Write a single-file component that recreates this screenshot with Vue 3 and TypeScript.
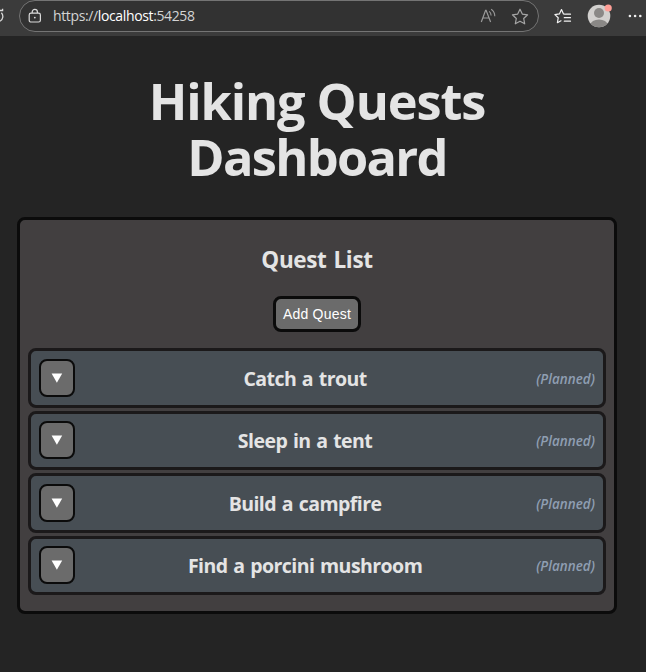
<script setup lang="ts">
import { ref } from 'vue'

interface Quest {
  id: number
  title: string
  status: string
}

const address = { scheme: 'https://', host: 'localhost', port: ':54258' }

const quests = ref<Quest[]>([
  { id: 1, title: 'Catch a trout', status: 'Planned' },
  { id: 2, title: 'Sleep in a tent', status: 'Planned' },
  { id: 3, title: 'Build a campfire', status: 'Planned' },
  { id: 4, title: 'Find a porcini mushroom', status: 'Planned' },
])
</script>

<template>
  <div class="window">
    <header class="toolbar">
      <svg class="reload" width="5" height="16" viewBox="0 0 5 16" fill="none" stroke="#d8d8d8" stroke-width="1.3">
        <path d="M0 2.5H2.6V0.8M0 13.2C3.4 11.2 3.6 7.2 1.4 4.8" />
      </svg>
      <div class="address">
        <svg class="lock" width="14" height="16" viewBox="0 0 14 16" fill="none" stroke="#dadada" stroke-width="1.2">
          <rect x="1.2" y="5.2" width="11.2" height="8.8" rx="1.8" />
          <path d="M4.2 5V3.9a2.6 2.6 0 0 1 5.2 0V5" />
          <circle cx="6.8" cy="9.6" r="0.9" fill="#dadada" stroke="none" />
        </svg>
        <span class="url">{{ address.scheme }}<b>{{ address.host }}</b>{{ address.port }}</span>
        <svg class="read" width="17" height="16" viewBox="0 0 17 16" fill="none" stroke="#9b9b9b" stroke-width="1.2">
          <path d="M1.3 14L5.6 2.4h.5L10.6 14M2.9 10h6.1" />
          <path d="M9.2 3.4q1.9 1.6 1.9 4M11.2 1.3q3.6 2.6 3.6 7" stroke-width="1.1" />
        </svg>
        <svg class="star" width="18" height="17" viewBox="0 0 18 17" fill="none" stroke="#a6a6a6" stroke-width="1.2" stroke-linejoin="round">
          <path d="M9 1.2l2.3 4.9 5.3.7-3.9 3.7 1 5.3L9 13.2l-4.7 2.6 1-5.3L1.4 6.8l5.3-.7z" />
        </svg>
      </div>
      <svg class="favorites" width="18" height="17" viewBox="0 0 18 17" fill="none" stroke="#f2f2f2" stroke-width="1.2" stroke-linejoin="round" stroke-linecap="round">
        <path d="M10.8 6.2L9.5 5.9 7.5 1.6 5.4 5.9.9 6.6 4.2 9.8l-.8 4.9L7 12.8M11.6 6.2h4.9M10.3 9.7h6.2M10.3 13.2h6.2" />
      </svg>
      <svg class="avatar" width="26" height="26" viewBox="0 0 26 26">
        <defs>
          <clipPath id="avatar-clip"><circle cx="12" cy="14" r="11.3" /></clipPath>
        </defs>
        <circle cx="12" cy="14" r="11.3" fill="#d2d0ce" />
        <g clip-path="url(#avatar-clip)" fill="#8a8886">
          <circle cx="12" cy="11" r="5" />
          <ellipse cx="12" cy="23" rx="8.5" ry="5.6" />
        </g>
        <circle cx="21.2" cy="6" r="3.6" fill="#ff9f97" />
      </svg>
      <svg class="more" width="14" height="4" viewBox="0 0 14 4" fill="#f0f0f0">
        <circle cx="1.9" cy="2" r="1.3" />
        <circle cx="7.1" cy="2" r="1.3" />
        <circle cx="12.3" cy="2" r="1.3" />
      </svg>
    </header>

    <main class="page">
      <h1><span class="first">Hiking Quests</span> <span class="second">Dashboard</span></h1>
      <section class="panel">
        <h2>Quest List</h2>
        <button class="add" type="button">Add Quest</button>
        <ul class="quests">
          <li v-for="quest in quests" :key="quest.id" class="quest">
            <button class="toggle" type="button" :aria-label="quest.title">
              <svg width="12" height="10" viewBox="0 0 12 10"><path d="M.6.5h10.6L5.9 9.8z" fill="#fff" /></svg>
            </button>
            <h3>{{ quest.title }}</h3>
            <span class="status">({{ quest.status }})</span>
          </li>
        </ul>
      </section>
    </main>
  </div>
</template>

<style>
body {
  background: #242424;
}
</style>

<style scoped>
.window {
  height: 672px;
  overflow: hidden;
  background: #242424;
  color: #e4e4e4;
  font-family: "Segoe UI", "Open Sans", "Noto Sans", sans-serif;
}

.toolbar {
  box-sizing: border-box;
  display: flex;
  align-items: center;
  height: 36px;
  padding-bottom: 4px;
  background: #3b3b3b;
}

.toolbar svg {
  display: block;
  flex: none;
}

.address {
  box-sizing: border-box;
  display: flex;
  align-items: center;
  width: 520px;
  height: 32px;
  margin-left: 14px;
  padding: 0 9px 0 8px;
  border: 1px solid #747474;
  border-radius: 16px;
  background: #323232;
}

.url {
  flex: 1;
  margin-left: 11px;
  font-size: 14px;
  line-height: 20px;
  letter-spacing: -0.37px;
  color: #d4d4d4;
}

.url b {
  font-weight: 400;
  color: #fff;
}

.star {
  margin-left: 14px;
}

.favorites {
  margin-left: 15px;
}

.avatar {
  margin: -3px 0 0 15px;
}

.more {
  margin-left: 15px;
}

.page {
  padding: 36.5px 29px 0 17px;
}

h1 {
  margin: 0;
  font-size: 50.5px;
  line-height: 56.6px;
  font-weight: 700;
  text-align: center;
}

h1 span {
  display: block;
}

.first {
  letter-spacing: -1.1px;
}

.second {
  letter-spacing: -1.7px;
}

.panel {
  box-sizing: border-box;
  height: 397px;
  margin-top: 31.3px;
  padding: 21px 8px 0;
  border: 3px solid #0b0b0b;
  border-radius: 8px;
  background: #423f40;
  text-align: center;
}

h2 {
  margin: 0;
  font-size: 22.5px;
  line-height: 38px;
  font-weight: 700;
  letter-spacing: -0.35px;
  word-spacing: 1.5px;
}

.add {
  display: block;
  box-sizing: border-box;
  width: 88px;
  height: 36px;
  margin: 17px auto 0;
  padding: 0;
  border: 3px solid #0b0b0b;
  border-radius: 8px;
  background: #6b6b6b;
  color: #fff;
  font-family: Arial, "Liberation Sans", sans-serif;
  font-size: 14px;
  letter-spacing: 0.2px;
}

.quests {
  display: flex;
  flex-direction: column;
  gap: 3px;
  margin: 16.25px 0 0;
  padding: 0;
  list-style: none;
}

.quest {
  box-sizing: border-box;
  display: grid;
  grid-template-columns: auto 1fr auto;
  align-items: center;
  height: 59.5px;
  padding: 0 8px;
  border: 3px solid #1b191a;
  border-radius: 8px;
  background: #474e54;
}

.toggle {
  box-sizing: border-box;
  display: flex;
  align-items: center;
  justify-content: center;
  width: 36px;
  height: 38px;
  padding: 0;
  border: 2px solid #0b0b0b;
  border-radius: 8px;
  background: #6b6b6b;
}

h3 {
  margin: 0 1px 0 0;
  padding-top: 2px;
  font-size: 19.5px;
  line-height: 28px;
  font-weight: 700;
  letter-spacing: -0.55px;
  word-spacing: 1.2px;
}

.status {
  padding-top: 2px;
  font-size: 13.4px;
  font-style: italic;
  font-weight: 600;
  letter-spacing: 0.05px;
  color: #8f9eb2;
}
</style>
